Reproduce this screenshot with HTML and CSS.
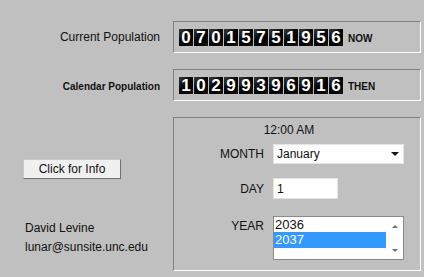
FILE: index.html
```html
<!DOCTYPE html>
<html lang="en">
<head>
  <meta charset="UTF-8">
  <title>Population Clock</title>
  <link rel="stylesheet" href="styles.css">
</head>
<body>

  <div class="counter-row">
    <div class="row-label">Current Population</div>
    <div class="box counter-box">
      <div class="digits">
        <span>0</span><span>7</span><span>0</span><span>1</span><span>5</span><span>7</span><span>5</span><span>1</span><span>9</span><span>5</span><span>6</span>
      </div>
      <span class="tag">NOW</span>
    </div>
  </div>

  <div class="counter-row second">
    <div class="row-label small">Calendar Population</div>
    <div class="box counter-box">
      <div class="digits">
        <span>1</span><span>0</span><span>2</span><span>9</span><span>9</span><span>3</span><span>9</span><span>6</span><span>9</span><span>1</span><span>6</span>
      </div>
      <span class="tag">THEN</span>
    </div>
  </div>

  <div class="bottom">
    <div class="side">
      <button class="info-btn" type="button">Click for Info</button>
      <div class="author">
        <div>David Levine</div>
        <div>lunar@sunsite.unc.edu</div>
      </div>
    </div>

    <div class="box date-box">
      <div class="time">12:00 AM</div>

      <div class="field month-field">
        <label>MONTH</label>
        <div class="select-wrap">
          <select name="month">
            <option>January</option>
            <option>February</option>
            <option>March</option>
          </select>
        </div>
      </div>

      <div class="field day-field">
        <label>DAY</label>
        <input type="text" name="day" value="1">
      </div>

      <div class="field year-field">
        <label>YEAR</label>
        <div class="year-list">
          <ul>
            <li>2036</li>
            <li class="selected">2037</li>
          </ul>
          <div class="scroll">
            <span class="arrow up"></span>
            <span class="arrow down"></span>
          </div>
        </div>
      </div>
    </div>
  </div>

</body>
</html>
```

FILE: styles.css
```css
body { margin: 0; width: 424px; height: 277px; overflow: hidden; background: #c0c0c0; font-family: "Liberation Sans", Arial, sans-serif; font-size: 12px; color: #111; }

.counter-row { display: flex; align-items: center; margin-top: 21px; }
.counter-row.second { margin-top: 16px; }
.row-label { width: 160px; padding-right: 13px; text-align: right; }
.row-label.small { font-size: 10px; font-weight: bold; padding-top: 2px; }

.box { width: 246px; border: 1px solid; border-color: #808080 #fff #fff #808080; }
.counter-box { height: 30px; display: flex; align-items: flex-end; padding-left: 5px; box-sizing: content-box; width: 241px; }

.digits { display: flex; gap: 1px; margin-bottom: 6px; }
.digits span { width: 14px; height: 17px; line-height: 17px; text-align: center; color: #fff; font-weight: bold; font-size: 17px; background: linear-gradient(135deg, #3c3c3c 0%, #050505 45%, #000 70%, #1c1c1c 100%); }
.tag { font-size: 10px; font-weight: bold; line-height: 10px; margin: 0 0 8px 5px; }

.bottom { display: flex; margin-top: 16px; }
.side { width: 173px; }
.info-btn { display: block; margin: 42px 0 0 23px; width: 98px; height: 20px; padding: 0; background: #f0f0f0; border: 1px solid; border-color: #c8c8c8 #707070 #707070 #c8c8c8; font-family: inherit; font-size: 12px; color: #111; }
.author { margin: 40px 0 0 25px; line-height: 19px; }

.date-box { height: 152px; }
.time { padding-top: 4px; line-height: 16px; padding-left: 0; width: 230px; text-align: center; }

.field { display: flex; align-items: center; }
.field label { width: 90px; text-align: right; margin-right: 9px; }
.month-field { margin-top: 6px; }
.day-field { margin-top: 14px; }
.year-field { margin-top: 17px; align-items: flex-start; }
.year-field label { padding-top: 3px; }

.select-wrap { position: relative; width: 131px; height: 20px; }
.select-wrap select { appearance: none; -webkit-appearance: none; width: 131px; height: 20px; margin: 0; padding: 0 0 0 3px; border: 1px solid #e4e4e4; border-radius: 0; background: #fff; font-family: inherit; font-size: 12px; color: #111; }
.select-wrap::after { content: ""; position: absolute; right: 5px; top: 8px; border-left: 4px solid transparent; border-right: 4px solid transparent; border-top: 4px solid #111; }

.day-field input { width: 65px; height: 21px; box-sizing: border-box; margin: 0; padding: 0 3px; border: 1px solid #e4e4e4; background: #fff; font-family: inherit; font-size: 12px; color: #111; }

.year-list { display: flex; width: 131px; height: 44px; box-sizing: border-box; border: 1px solid #8a8a8a; background: #fff; }
.year-list ul { list-style: none; margin: 0; padding: 0; flex: 1; }
.year-list li { height: 15px; line-height: 15px; padding-left: 1px; font-size: 13px; }
.year-list li.selected { height: 16px; line-height: 16px; background: #3399ff; color: #fff; }
.scroll { width: 17px; display: flex; flex-direction: column; justify-content: space-between; align-items: center; padding: 8px 0 7px; box-sizing: border-box; }
.arrow { border-left: 3px solid transparent; border-right: 3px solid transparent; }
.arrow.up { border-bottom: 3px solid #707070; }
.arrow.down { border-top: 3px solid #707070; }
```
